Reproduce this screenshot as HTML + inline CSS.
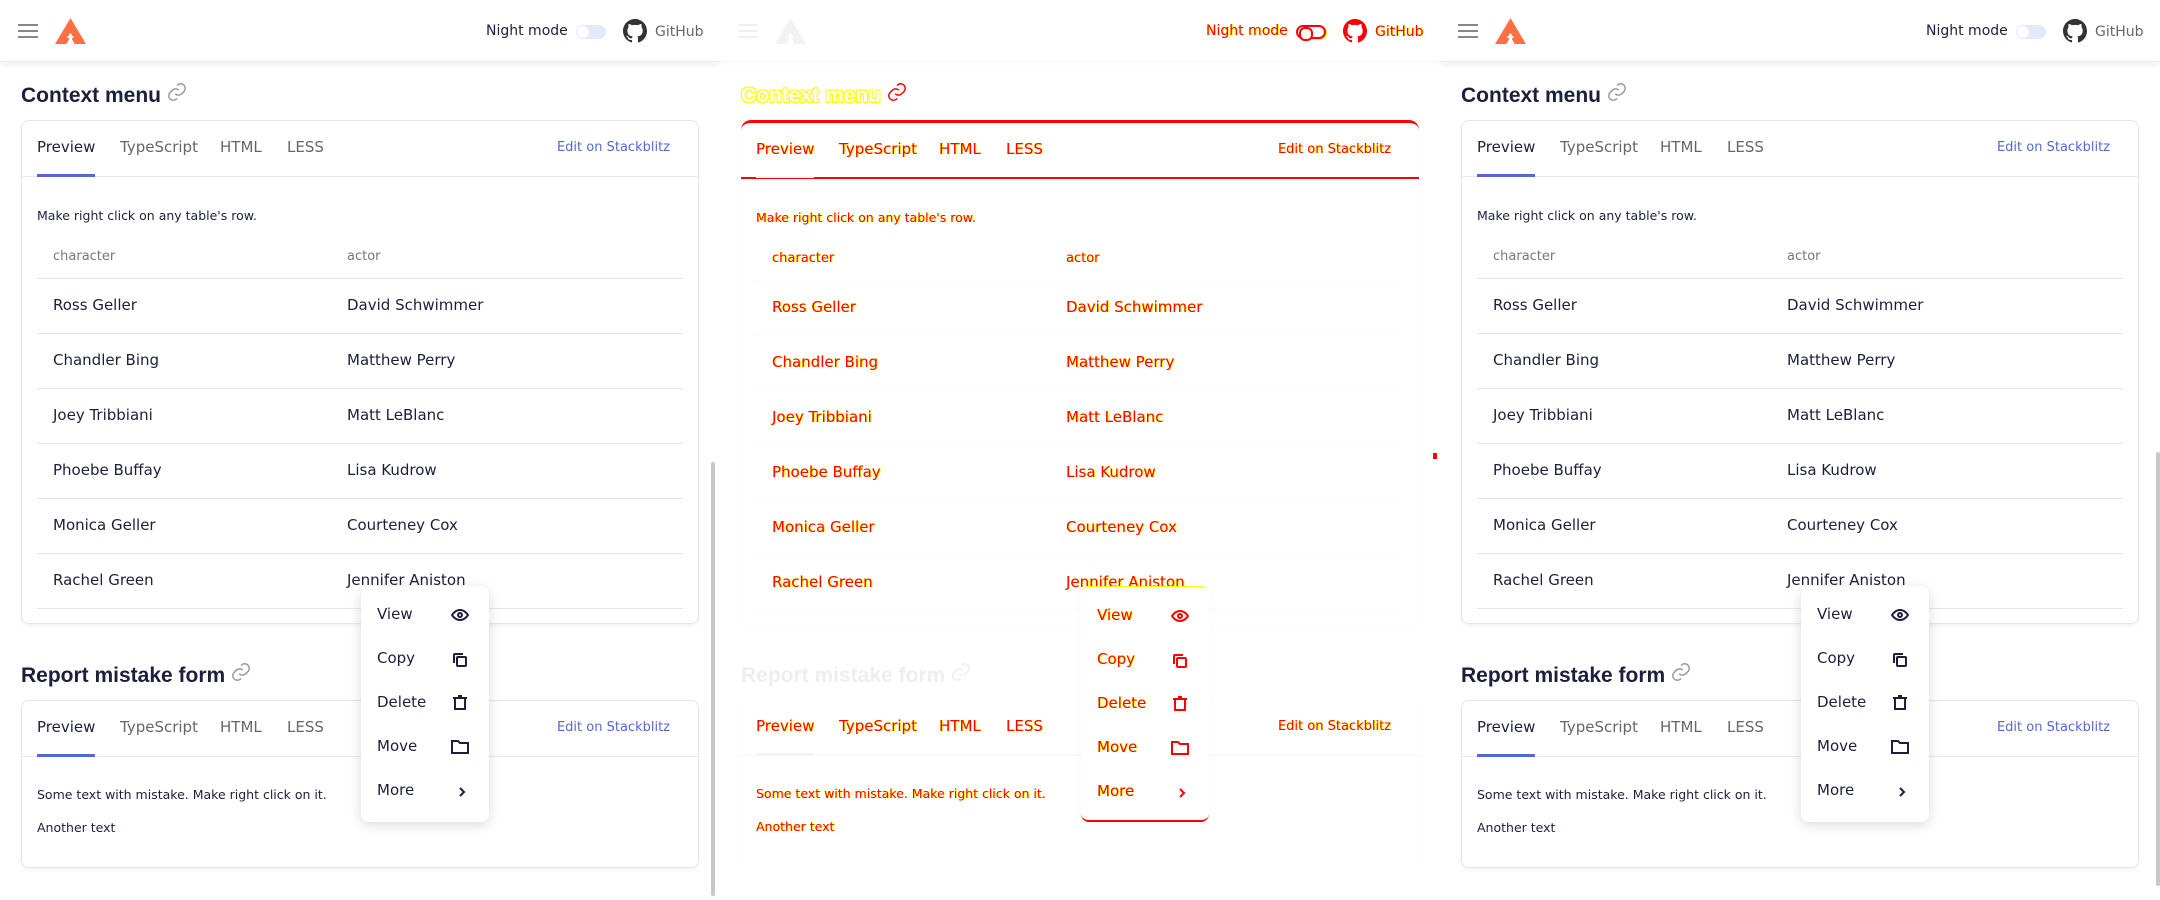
<!DOCTYPE html>
<html><head><meta charset="utf-8">
<style>
*{box-sizing:border-box;margin:0;padding:0}
body{width:2160px;height:900px;overflow:hidden;background:#fff;font-family:"DejaVu Sans","Liberation Sans",sans-serif;color:#1b1f3b;position:relative}
.p{position:absolute;top:0;width:720px;height:900px;overflow:hidden;background:#fff}
.hdr{position:absolute;left:0;top:0;width:720px;height:62px;background:#fff;box-shadow:0 2px 8px rgba(0,0,0,.08);border-bottom:1px solid #eee}
.ham{position:absolute;left:18px;top:24px;width:20px;height:14px;border-top:2px solid #888;border-bottom:2px solid #888}
.ham:after{content:"";position:absolute;left:0;top:4px;width:20px;height:2px;background:#888}
.logo{position:absolute;left:55px;top:18px}
.nm{position:absolute;left:486px;top:23px;font-size:14px}
.tg{position:absolute;left:576px;top:25px;width:30px;height:14px;border-radius:7px;background:#e3e8fb}
.tg:after{content:"";position:absolute;left:1px;top:1px;width:12px;height:12px;border-radius:6px;background:#fff}
.gh{position:absolute;left:623px;top:19px}
.ght{position:absolute;left:655px;top:24px;font-size:14px;color:#666}
h2{position:absolute;left:21px;font-family:"Liberation Sans",sans-serif;font-weight:bold;font-size:21px;color:#1b1f3b;white-space:nowrap}
h2 svg{vertical-align:-1px;margin-left:5px}
.card{position:absolute;left:21px;width:678px;border:1px solid #e6e6e6;border-radius:8px;background:#fff;box-shadow:0 2px 4px rgba(0,0,0,.05)}
.tabs{position:absolute;left:0;top:0;width:100%;height:56px;border-bottom:1px solid #e6e6e6}
.tab{position:absolute;top:17px;font-size:15px;color:#666}
.tab.a{color:#1b1f3b}
.ul{position:absolute;left:15px;top:53px;width:58px;height:3px;background:#5468d4}
.ed{position:absolute;right:28px;top:19px;font-size:13px;color:#5468d4}
.txt{position:absolute;left:15px;font-size:12.5px}
.th{position:absolute;font-size:13px;color:#777}
.row{position:absolute;left:15px;width:646px;height:55px;border-top:1px solid #e6e6e6}
.row span{position:absolute;top:-11px;font-size:15px}
.menu{position:absolute;left:361px;top:586px;width:128px;height:236px;background:#fff;border-radius:8px;box-shadow:0 3px 12px rgba(0,0,0,.15)}
.mi{position:absolute;left:16px;font-size:15px}
.ic{position:absolute;left:90px}
.sb{position:absolute;left:711px;width:4px;background:#c8c8cc;border-radius:2px}
/* diff panel */
.d .hdr{box-shadow:0 2px 8px rgba(0,0,0,.02);border-bottom:1px solid #f7f7f7}
.d .ham{border-color:#f0f0f0}.d .ham:after{background:#f0f0f0}
.d .logo path:first-child{fill:#f2f2f2}
.d .nm,.d .ght,.d .tab,.d .ed,.d .txt,.d .th,.d .row span,.d .mi{color:#f00;text-shadow:1px 0 #ff0}
.d h2.c{color:#fff;text-shadow:1px 1px #ff0,-1px -1px #ff0,1px -1px #ff0,-1px 1px #ff0}
.d h2 svg{stroke:#f00}
.d .ic{stroke:#f00}
.d .tg{background:#fff;border:2px solid #f00;box-shadow:1px 1px #ff0}
.d .tg:after{border:2px solid #f00;background:#fff;top:0;left:1px;width:10px;height:10px}
.d .gh path{fill:#f00}
.d .card{border:none;box-shadow:0 0 3px rgba(0,0,0,.02)}
.d .c1{border-top:3px solid #f00;border-radius:10px 10px 0 0}
.d .c1 .tabs{border-bottom:2px solid #f00}
.d .c2 .tabs{border-bottom:1px solid #f5f5f5}
.d .ul{background:#f3f3f3;height:2px}
.d .row{border-top:1px solid #fafafa}
.d .menu{box-shadow:0 0 10px rgba(0,0,0,.03);border-bottom:2px solid #f00;border-top:1px solid #ff0}
.d h2.r{color:#eee}
.d h2.r svg{stroke:#eee}
.d .sb{display:none}
</style></head><body>

<div class="p" style="left:0">
<div class="hdr"><div class="ham"></div>
<svg class="logo" width="31" height="26" viewBox="0 0 31 26"><path d="M15.5 0L31 26H19.5L15.5 18 11.5 26H0Z" fill="#ff7043"/><path d="M15.5 15l-4 5h2.5v6h3v-6H19z" fill="#fff"/></svg>
<div class="nm">Night mode</div><div class="tg"></div>
<svg class="gh" width="24" height="24" viewBox="0 0 16 16"><path fill="#333" d="M8 0C3.58 0 0 3.58 0 8c0 3.540 2.29 6.53 5.47 7.59.4.07.55-.17.55-.38v-1.33c-2.23.48-2.7-1.070-2.7-1.070-.36-.92-.89-1.17-.89-1.17-.73-.5.05-.49.05-.49.8.06 1.23.83 1.23.83.72 1.23 1.88.87 2.34.67.07-.52.28-.87.51-1.07-1.78-.2-3.64-.89-3.64-3.95 0-.87.31-1.59.82-2.15-.08-.2-.36-1.020.08-2.12 0 0 .67-.21 2.2.82a7.6 7.6 0 014 0c1.53-1.04 2.2-.82 2.2-.82.44 1.1.16 1.92.08 2.12.51.56.82 1.27.82 2.15 0 3.07-1.87 3.75-3.65 3.95.29.25.54.73.54 1.48v2.2c0 .21.15.46.55.38A8.01 8.01 0 0016 8c0-4.42-3.58-8-8-8z"/></svg>
<div class="ght">GitHub</div></div>
<h2 class="c" style="top:81px">Context menu<svg width="22" height="22" viewBox="0 0 24 24" fill="none" stroke="#999" stroke-width="1.6"><path d="M10 14a5 5 0 007 0l3-3a5 5 0 00-7-7l-1 1"/><path d="M14 10a5 5 0 00-7 0l-3 3a5 5 0 007 7l1-1"/></svg></h2>
<div class="card c1" style="top:120px;height:504px">
<div class="tabs"><span class="tab a" style="left:15px">Preview</span><span class="tab" style="left:98px">TypeScript</span><span class="tab" style="left:198px">HTML</span><span class="tab" style="left:265px">LESS</span><span class="ed">Edit on Stackblitz</span><div class="ul"></div></div>
<div class="txt" style="top:87px">Make right click on any table's row.</div>
<div class="th" style="left:31px;top:128px">character</div><div class="th" style="left:325px;top:128px">actor</div>
<div class="row" style="top:157px"><span style="left:16px;top:17px">Ross Geller</span><span style="left:310px;top:17px">David Schwimmer</span></div>
<div class="row" style="top:212px"><span style="left:16px;top:17px">Chandler Bing</span><span style="left:310px;top:17px">Matthew Perry</span></div>
<div class="row" style="top:267px"><span style="left:16px;top:17px">Joey Tribbiani</span><span style="left:310px;top:17px">Matt LeBlanc</span></div>
<div class="row" style="top:322px"><span style="left:16px;top:17px">Phoebe Buffay</span><span style="left:310px;top:17px">Lisa Kudrow</span></div>
<div class="row" style="top:377px"><span style="left:16px;top:17px">Monica Geller</span><span style="left:310px;top:17px">Courteney Cox</span></div>
<div class="row" style="top:432px"><span style="left:16px;top:17px">Rachel Green</span><span style="left:310px;top:17px">Jennifer Aniston</span></div>
<div class="row" style="top:487px;height:1px"></div>
</div>
<h2 class="r" style="top:661px">Report mistake form<svg width="22" height="22" viewBox="0 0 24 24" fill="none" stroke="#999" stroke-width="1.6"><path d="M10 14a5 5 0 007 0l3-3a5 5 0 00-7-7l-1 1"/><path d="M14 10a5 5 0 00-7 0l-3 3a5 5 0 007 7l1-1"/></svg></h2>
<div class="card c2" style="top:700px;height:168px">
<div class="tabs"><span class="tab a" style="left:15px">Preview</span><span class="tab" style="left:98px">TypeScript</span><span class="tab" style="left:198px">HTML</span><span class="tab" style="left:265px">LESS</span><span class="ed">Edit on Stackblitz</span><div class="ul"></div></div>
<div class="txt" style="top:86px">Some text with mistake. Make right click on it.</div>
<div class="txt" style="top:119px">Another text</div>
</div>
<div class="menu">
<span class="mi" style="top:19px">View</span><span class="mi" style="top:63px">Copy</span><span class="mi" style="top:107px">Delete</span><span class="mi" style="top:151px">Move</span><span class="mi" style="top:195px">More</span>
<svg class="ic" style="top:22px" width="18" height="14" viewBox="0 0 18 14" fill="none" stroke="#1b1f3b" stroke-width="2"><path d="M1 7s3-5 8-5 8 5 8 5-3 5-8 5-8-5-8-5z"/><circle cx="9" cy="7" r="2"/></svg>
<svg class="ic" style="top:65px" width="18" height="18" viewBox="0 0 18 18" fill="none" stroke="#1b1f3b" stroke-width="2"><rect x="6" y="6" width="9" height="9" rx="1"/><path d="M3 12V4a1 1 0 011-1h8"/></svg>
<svg class="ic" style="top:108px" width="18" height="18" viewBox="0 0 18 18" fill="none" stroke="#1b1f3b" stroke-width="2"><path d="M4 4h10v11H4zM2 4h14M7 2h4"/></svg>
<svg class="ic" style="top:153px" width="18" height="16" viewBox="0 0 18 16" fill="none" stroke="#1b1f3b" stroke-width="2"><path d="M1 2h6l2 2h8v10H1z"/></svg>
<svg class="ic" style="top:199px;left:96px" width="10" height="14" viewBox="0 0 10 14" fill="none" stroke="#1b1f3b" stroke-width="2"><path d="M3 3l4 4-4 4"/></svg>
</div>
<div class="sb" style="top:462px;height:434px"></div>
</div>

<script>
var src=document.querySelector('.p');
var m=src.cloneNode(true);m.style.left='720px';m.classList.add('d');document.body.appendChild(m);
var r=src.cloneNode(true);r.style.left='1440px';document.body.appendChild(r);
r.querySelector('.sb').style.left='716px';r.querySelector('.sb').style.top='452px';
var dot=document.createElement('div');dot.style.cssText='position:absolute;left:713px;top:453px;width:4px;height:6px;background:#f00';m.appendChild(dot);
</script>
</body></html>
